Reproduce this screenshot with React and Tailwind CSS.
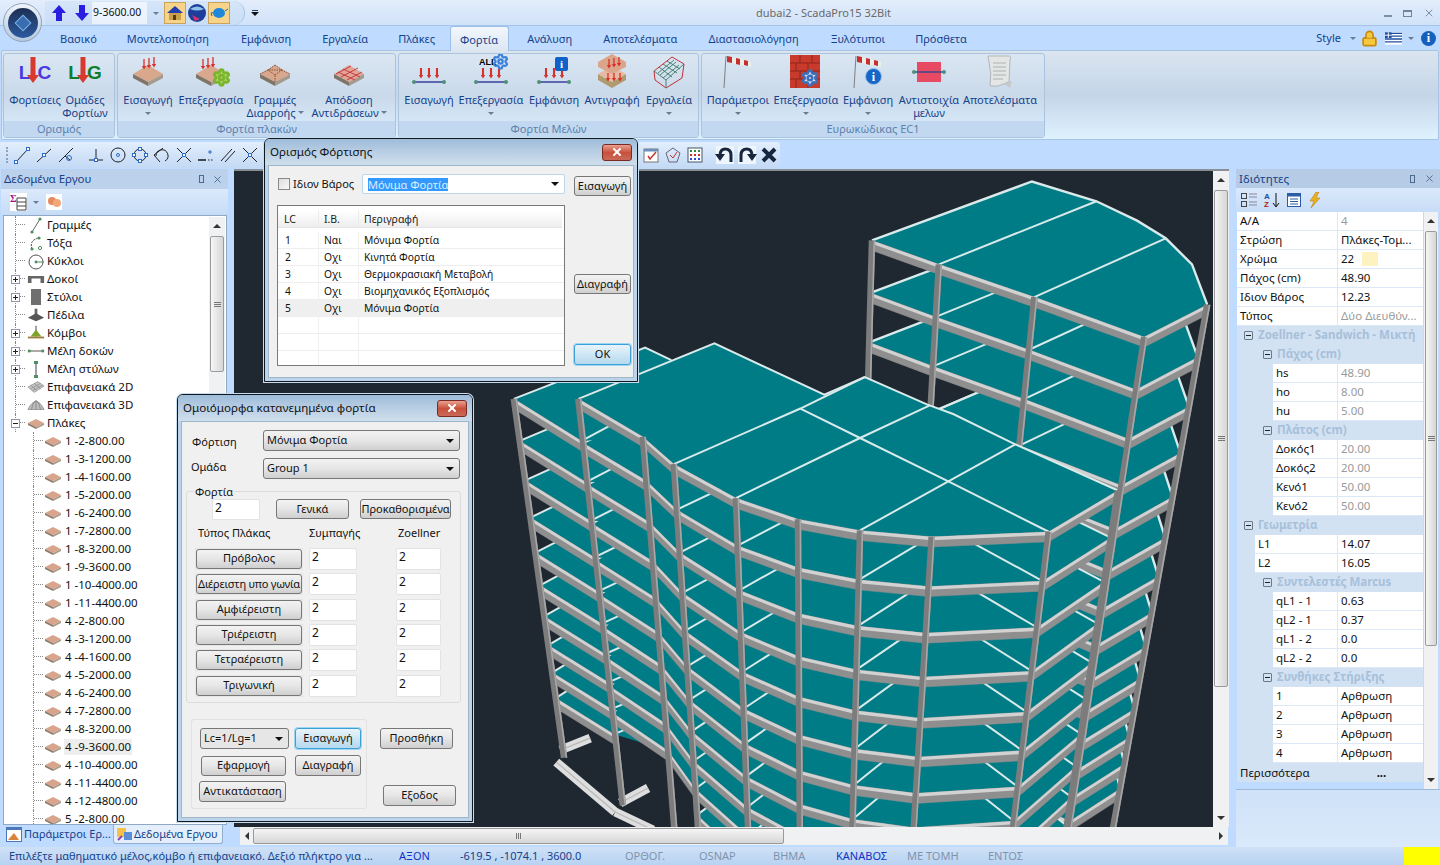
import React from "react";
import { Settings, Lock, X } from "lucide-react";

const X0 = (z) => 480 + 0.4783 * z;
const Y0 = (z) => 170 + 0.4211 * z;
const lvl = (p, k, base) => {
  const dy = p[2] ?? (base ?? 100 + (p[1] - 542) * 0.055);
  const g = (1 - Math.pow(0.94, k)) / 0.06;
  return [p[0] + ((690 - p[0]) / (5566 - p[1])) * dy * g, p[1] + dy * g];
};
const pts = (arr, k, base) => arr.map((p) => { const q = lvl(p, k, base); return `${X0(q[0]).toFixed(1)},${Y0(q[1]).toFixed(1)}`; }).join(" ");

const TEAL = "#007c86";
const band = (p, q, h0, h1) => [[p[0], p[1] + h0], [q[0], q[1] + h0], [q[0], q[1] + h1], [p[0], p[1] + h1]].map((c) => `${X0(c[0]).toFixed(1)},${Y0(c[1]).toFixed(1)}`).join(" ");
const Beam = ({ arr, k, base, h = 24 }) => (
  <g>
    {arr.slice(1).map((b, i) => {
      const p = lvl(arr[i], k, base), q = lvl(b, k, base);
      return (
        <g key={i}>
          <polygon points={band(p, q, 0, h)} fill="#8f8f8f" stroke="#8f8f8f" strokeWidth="0.5" />
          <polygon points={band(p, q, 0, 8)} fill="#d2d2d2" />
        </g>
      );
    })}
  </g>
);
const Col = ({ p, from = 0, to, base }) => {
  const a = lvl(p, from, base), b = lvl(p, to, base);
  return (
    <g>
      <line x1={X0(a[0])} y1={Y0(a[1])} x2={X0(b[0])} y2={Y0(b[1])} stroke="#7c7c7c" strokeWidth={6.5} />
      <line x1={X0(a[0]) + 2.4} y1={Y0(a[1])} x2={X0(b[0]) + 2.4} y2={Y0(b[1])} stroke="#a8a8a8" strokeWidth={1.6} />
    </g>
  );
};
const Lines = ({ list, k, base }) => list.map((l, i) => <polyline key={i} points={pts(l, k, base)} fill="none" stroke="#d8eaea" strokeWidth={2} />);

const FOUND = [[556,762,615,812],[560,750,590,738],[620,803,648,788],[615,812,653,830]];

function Building() {
  const TB = 125;
  const T = [[820,165],[1155,25],[1290,72],[1375,118],[1435,160],[1490,222],[1522,318],[1390,395],[1160,300],[960,222]];
  const TLow = [[960,222],[1290,72],[1375,118],[1435,160],[1490,222],[1522,318],[1390,395],[1160,300]];
  const Tfront = [[820,165],[960,222],[1160,300],[1390,395],[1522,318]];
  const Tfront2 = [[960,222],[1160,300],[1390,395],[1522,318]];
  const Tcurve = [[820,165],[1155,25],[1290,72],[1375,118],[1435,160],[1490,222],[1522,318]];
  const Tcurve2 = [[960,222],[1290,72],[1375,118],[1435,160],[1490,222],[1522,318]];
  const Tl = [[[960,222],[1290,72]],[[1160,300],[1435,160]]];
  const B = [205,542,105];
  const W = [[70,542],[345,420],[400,450],[205,540],[340,632],[212,642,98]];
  const Wb = [[70,542],[212,642,98]];
  const Wl = [[[70,542],[345,420],[400,450]],[[212,642,98],[330,570]]];
  const L = [B,[490,410],[720,532],[805,490],[935,555],[990,578],[1120,650],[1335,760],[1190,858],[945,870],[795,855],[665,828],[535,778],[405,697],[340,632]];
  const L2 = [[405,697],[670,565],[805,490],[935,555],[990,578],[1120,650],[1335,760],[1190,858],[945,870],[795,855],[665,828],[535,778]];
  const Lf = [B,[340,632],[405,697],[535,778],[665,828],[795,855],[945,870],[1190,858],[1335,760]];
  const Lback = [B,[490,410],[720,532],[805,490],[935,555],[990,578],[1120,650],[1335,760]];
  const Ll = [[[405,697],[670,565],[805,490]],[[535,778],[795,635],[940,558]],[[795,855],[980,738],[1120,650]],[[1190,858],[980,738],[795,635],[670,565]]];
  const levels = [13,12,11,10,9,8,7,6,5,4,3,2,1,0];
  return (
    <svg viewBox="234 170 979 657" className="block w-full h-full">
      {levels.map((k) => {
        const low = k >= 3;
        return (
          <g key={k}>
            <polygon points={pts(low ? TLow : T, k, TB)} fill={TEAL} />
            <polyline points={pts(low ? Tcurve2 : Tcurve, k, TB)} fill="none" stroke="#d8eaea" strokeWidth={2.4} />
            <Lines list={Tl} k={k} base={TB} />
            <Beam arr={low ? Tfront2 : Tfront} k={k} base={TB} />
          </g>
        );
      })}
      {[[820,165],[960,222],[1160,300]].map((p, i) => <Col key={i} p={p} to={3} base={TB} />)}
      {FOUND.map((a, i) => (
        <g key={i}>
          <line x1={a[0]} y1={a[1]} x2={a[2]} y2={a[3]} stroke="#dedede" strokeWidth={9} />
          <line x1={a[0]} y1={a[1]} x2={a[2]} y2={a[3]} stroke="#b8b8b8" strokeWidth={1.2} />
        </g>
      ))}
      {levels.map((k) => {
        const deep = k >= 10;
        return (
          <g key={k}>
            {!deep && <polygon points={pts(W, k)} fill={TEAL} />}
            {!deep && <Lines list={Wl} k={k} />}
            {!deep && <Beam arr={Wb} k={k} />}
            <polygon points={pts(deep ? L2 : L, k)} fill={TEAL} />
            <polyline points={pts(deep ? Lback.slice(3) : Lback, k)} fill="none" stroke="#d8eaea" strokeWidth={2} />
            <Lines list={Ll} k={k} />
            <Beam arr={deep ? Lf.slice(2) : Lf} k={k} />
          </g>
        );
      })}
      <Col p={[70,542]} to={11.6} />
      <Col p={B} to={13} />
      {Lf.slice(1).map((p, i) => <Col key={i} p={p} to={16} />)}
      <Col p={[1390,395]} to={16} base={TB} />
      <Col p={[1522,318]} to={16} base={TB} />
    </svg>
  );
}

/* ---------- ribbon icons ---------- */
const RA = ({ x, y, h = 9, s = 1 }) => (
  <g stroke="#d8312a" fill="#d8312a" strokeWidth={1.3 * s}>
    <line x1={x} y1={y} x2={x} y2={y + h} />
    <polygon points={`${x - 2.2},${y + h - 2} ${x + 2.2},${y + h - 2} ${x},${y + h + 1.5}`} stroke="none" />
  </g>
);
const Slab = ({ children, top = "#d9a78c" }) => (
  <svg width="36" height="34" viewBox="0 0 36 34">
    <polygon points="3,19 18,10 33,19 18,27" fill={top} />
    <polygon points="3,19 18,27 18,31 3,23" fill="#7e7468" />
    <polygon points="33,19 18,27 18,31 33,23" fill="#a49a8e" />
    {children}
  </svg>
);
const LoadBeam = ({ children }) => (
  <svg width="36" height="34" viewBox="0 0 36 34">
    <line x1="3" y1="27" x2="33" y2="27" stroke="#37409c" strokeWidth="1.6" />
    <circle cx="3" cy="27" r="2" fill="#4f8f78" /><circle cx="33" cy="27" r="2" fill="#4f8f78" />
    <RA x={10} y={13} h={9} s={1.6} /><RA x={18} y={13} h={9} s={1.6} /><RA x={26} y={13} h={9} s={1.6} />
    {children}
  </svg>
);
const Sock = ({ children }) => (
  <svg width="36" height="36" viewBox="0 0 36 36">
    <line x1="6" y1="2" x2="4" y2="34" stroke="#666" strokeWidth="0.8" />
    <polygon points="7,2 31,8 31,13 7,8" fill="#e8efe8" />
    <polygon points="7,2 12,3 12,9 7,8" fill="#c92f2f" /><polygon points="16,4 20,5 20,11 16,10" fill="#c92f2f" /><polygon points="24,6 28,7 28,12 24,11" fill="#c92f2f" />
    {children}
  </svg>
);
const LG = ({ a, b, c }) => (
  <div className="relative h-[34px] w-[40px] flex items-center justify-center">
    <span className={`flex gap-[7px] text-[19px] font-bold leading-none ${c} font-['Liberation_Sans',sans-serif]`}><span>{a}</span><span>{b}</span></span>
    <svg className="absolute left-[12px] top-[2px]" width="12" height="28" viewBox="0 0 12 28">
      <rect x="3.5" y="0" width="5" height="19" fill="#d8392f" /><polygon points="0,18 12,18 6,26" fill="#d8392f" />
    </svg>
  </div>
);
const IC = {
  lc: <LG a="L" b="C" c="text-[#4a39e0]" />,
  lg: <LG a="L" b="G" c="text-[#0d7d2c]" />,
  s1: <Slab><RA x={14} y={4} /><RA x={19} y={3} /><RA x={24} y={2} /></Slab>,
  s2: (
    <div className="relative">
      <Slab><RA x={10} y={4} /><RA x={15} y={3} /><RA x={20} y={2} /></Slab>
      <Settings size={19} strokeWidth={3.4} className="absolute left-[19px] top-[13px] text-[#7ab52e] fill-[#b0d060]" />
    </div>
  ),
  s3: <Slab><g stroke="#6d3f2b" strokeWidth="0.8" strokeDasharray="1.5 1" fill="none"><path d="M3 19 L11 15 L25 15 L33 19 M11 15 L18 10 M25 15 L18 10 M18 27 L18 20 L11 15 M18 20 L25 15" /></g></Slab>,
  s4: <Slab top="#e0a595"><g stroke="#c4303a" strokeWidth="0.9" fill="none"><path d="M7 17 L24 25 M12 14 L29 22 M10 22 L27 13 M16 25 L31 17 M5 19 L20 11" /></g></Slab>,
  m1: <LoadBeam />,
  m2: (
    <div className="relative">
      <LoadBeam><text x="6" y="10" fontSize="9" fontWeight="700" fontFamily="Liberation Sans">ALL</text></LoadBeam>
      <Settings size={17} strokeWidth={3.2} className="absolute left-[19px] top-[-2px] text-[#3b82d8]" />
    </div>
  ),
  m3: (
    <LoadBeam>
      <rect x="19" y="2" width="13" height="14" rx="2" fill="#0f63c8" />
      <text x="25.5" y="13" fontSize="11" fontWeight="700" fill="#fff" textAnchor="middle" fontFamily="Liberation Serif">i</text>
    </LoadBeam>
  ),
  m4: (
    <svg width="32" height="36" viewBox="0 0 32 36">
      <polygon points="2,20 16,28 30,20 30,26 16,34 2,26" fill="#b09a6f" />
      <polygon points="2,20 16,12 30,20 16,28" fill="#e7b9a0" />
      <polygon points="2,8 16,0 30,8 30,13 16,20 2,13" fill="#dba58c" />
      <RA x={13} y={5} h={8} /><RA x={18} y={4} h={8} /><RA x={23} y={3} h={8} />
      <RA x={12} y={19} h={7} /><RA x={18} y={19} h={7} /><RA x={24} y={19} h={7} />
    </svg>
  ),
  m5: (
    <svg width="34" height="36" viewBox="0 0 34 36" fill="none">
      <path d="M2 17 L20 3 L32 10 L30 24 L14 34 L3 26 Z" stroke="#c4303a" strokeWidth="1" />
      <path d="M2 17 L14 26 L32 10 M14 26 L14 34 M7 13 L20 23 M11 10 L25 19 M15 7 L28 15 M8 21 L24 8 M11 24 L27 11 M6 19 L22 6" stroke="#3a7a66" strokeWidth="0.9" />
    </svg>
  ),
  e1: <Sock />,
  e2: (
    <div className="relative">
      <svg width="32" height="34" viewBox="0 0 32 34">
        <rect width="30" height="33" y="0" fill="#c83a2c" />
        <path d="M0 8 H30 M0 16 H30 M0 24 H30 M10 0 V8 M22 0 V8 M6 8 V16 M18 8 V16 M10 16 V24 M22 16 V24 M6 24 V33 M18 24 V33" stroke="#8f241a" strokeWidth="1" />
      </svg>
      <Settings size={18} strokeWidth={3.4} className="absolute left-[11px] top-[14px] text-[#3d6fb8] fill-[#cfe0f5]" />
    </div>
  ),
  e3: (
    <div className="relative">
      <Sock />
      <div className="absolute left-[15px] top-[14px] w-[17px] h-[17px] rounded-full bg-[#1666c8] border border-[#9fc4ea] flex items-center justify-center text-white text-[12px] font-bold leading-none font-['Liberation_Serif',serif]">i</div>
    </div>
  ),
  e4: (
    <svg width="34" height="30" viewBox="0 0 34 30">
      <rect x="5" y="5" width="24" height="20" fill="#e84a63" />
      <line x1="1" y1="15" x2="33" y2="15" stroke="#3b4a8e" strokeWidth="1.5" />
      <circle cx="2" cy="15" r="2" fill="#4f8f78" /><circle cx="32" cy="15" r="2" fill="#4f8f78" />
    </svg>
  ),
  e5: (
    <svg width="32" height="36" viewBox="0 0 32 36">
      <path d="M4 2 H24 Q28 2 26 6 L25 28 L14 32 L6 32 Q8 20 5 8 Z" fill="#e4e6e6" stroke="#a6aaa8" strokeWidth="0.8" />
      <path d="M9 9 H22 M9 13 H22 M9 17 H22 M9 21 H22 M9 25 H19" stroke="#a0a4a4" strokeWidth="0.8" />
      <path d="M20 30 L28 27 L26 34 Z" fill="#c6cac8" />
    </svg>
  ),
};

const Caret = () => <span className="block w-0 h-0 border-x-[3px] border-x-transparent border-t-[3px] border-t-[#6a7c94]" />;

const RItem = ({ w, icon, l1, l2, caret, inlineCaret }) => (
  <div className="flex flex-col items-center" style={{ width: w }}>
    <div className="h-[36px] flex items-center justify-center">{icon}</div>
    <div className="mt-[3px] text-[11px] leading-[13px] text-[#15428b] whitespace-nowrap text-center">{l1}</div>
    {l2 && (
      <div className="text-[11px] leading-[13px] text-[#15428b] whitespace-nowrap flex items-center gap-[2px]">
        {l2}{inlineCaret && <Caret />}
      </div>
    )}
    {caret && <div className="mt-[6px]"><Caret /></div>}
  </div>
);

const RGroup = ({ w, pl, title, children }) => (
  <div className="h-[85px] flex flex-col rounded-[3px] border border-[#aac3df] overflow-hidden bg-gradient-to-b from-[#dbe6f2] via-[#c9d9ea] to-[#dceefd] shrink-0" style={{ width: w }}>
    <div className="h-[68px] flex" style={{ paddingLeft: pl }}>{children}</div>
    <div className="flex-1 bg-[#c2d8f0] text-center text-[11px] leading-[16px] text-[#5b82ad]">{title}</div>
  </div>
);

/* ---------- toolbar icons ---------- */
const TI = ({ children, w = 22 }) => (
  <svg width={w} height="20" viewBox="0 0 20 20" fill="none" stroke="#222" strokeWidth="1" className="shrink-0">{children}</svg>
);
const Dot = ({ x, y }) => <rect x={x - 1.5} y={y - 1.5} width="3" height="3" fill="#fff" stroke="#2a6cc8" strokeWidth="1" />;
const TOOLS1 = [
  <TI><path d="M4 17 L16 4" /><Dot x={4} y={17} /><Dot x={16} y={4} /></TI>,
  <TI><path d="M3 17 L17 4" /><Dot x={10} y={10} /></TI>,
  <TI><path d="M3 17 L17 3 M9 11 L14 15" /><circle cx="13" cy="13" r="2.5" stroke="#2a6cc8" /></TI>,
];
const TOOLS2 = [
  <TI><path d="M3 15 H17 M10 4 V15" /><Dot x={10} y={15} /></TI>,
  <TI><circle cx="10" cy="10" r="7" /><circle cx="10" cy="10" r="1.5" stroke="#2a6cc8" /></TI>,
  <TI><circle cx="10" cy="10" r="6" /><Dot x={10} y={4} /><Dot x={10} y={16} /><Dot x={4} y={10} /><Dot x={16} y={10} /></TI>,
  <TI><path d="M4 11 A6 6 0 1 1 13 16" /><path d="M2 10 L11 3 M2 10 L8 17" /></TI>,
  <TI><path d="M3 3 L17 17 M17 3 L3 17" /><Dot x={10} y={10} /></TI>,
  <TI><path d="M2 15 H10" strokeWidth="1.6" /><path d="M12 15 H18" strokeDasharray="1.5 1.5" /><path d="M14 5 V9 M12 7 H16" stroke="#2a6cc8" /></TI>,
  <TI><path d="M3 16 L14 4 M7 17 L17 6" /></TI>,
  <TI><path d="M3 3 L8 8 M12 12 L17 17 M17 3 L12 8 M8 12 L3 17" /><Dot x={10} y={10} /></TI>,
];
const TOOLS3 = [
  <TI><rect x="3" y="4" width="14" height="13" fill="#fff" stroke="#777" /><rect x="3" y="4" width="14" height="2.5" fill="#6d8fc0" stroke="none" /><path d="M7 11 L9 14 L15 7" stroke="#c8312b" strokeWidth="1.4" /></TI>,
  <TI><polygon points="10,3 17,8 14,17 6,17 3,8" stroke="#667" /><path d="M7 10 L10 13 L14 7" stroke="#c8312b" /></TI>,
  <TI><rect x="3" y="3" width="14" height="14" fill="#fff" stroke="#456" /><path d="M5 6 H7 M9 6 H11 M13 6 H15" stroke="#2a8a3a" strokeWidth="2" /><path d="M5 10 H7 M9 10 H11 M13 10 H15" stroke="#c8312b" strokeWidth="2" /><path d="M5 14 H7 M9 14 H11 M13 14 H15" stroke="#2a4ac8" strokeWidth="2" /></TI>,
];
const TOOLS4 = [
  <TI><rect x="1" y="1" width="18" height="18" fill="#eef5fd" stroke="none" /><path d="M16 17 V10 Q16 4 10 4 Q6 4 5 9" stroke="#16263c" strokeWidth="3" /><polygon points="0,9 10,9 5,16" fill="#16263c" stroke="none" /></TI>,
  <TI><rect x="1" y="1" width="18" height="18" fill="#eef5fd" stroke="none" /><path d="M4 17 V10 Q4 4 10 4 Q14 4 15 9" stroke="#16263c" strokeWidth="3" /><polygon points="20,9 10,9 15,16" fill="#16263c" stroke="none" /></TI>,
  <TI><path d="M4 4 L16 16 M16 4 L4 16" stroke="#16263c" strokeWidth="4" /></TI>,
];

/* ---------- scrollbars ---------- */
const Arrow = ({ d }) => {
  const m = {
    u: "border-x-[4px] border-x-transparent border-b-[4px] border-b-[#333]",
    d: "border-x-[4px] border-x-transparent border-t-[4px] border-t-[#333]",
    l: "border-y-[4px] border-y-transparent border-r-[4px] border-r-[#333]",
    r: "border-y-[4px] border-y-transparent border-l-[4px] border-l-[#333]",
  };
  return <span className={`block w-0 h-0 ${m[d]}`} />;
};
const VScroll = ({ top, thumb, w = 16 }) => (
  <div className="flex flex-col h-full bg-[#eff1f3] shrink-0 items-center" style={{ width: w }}>
    <div className="h-[18px] flex items-center justify-center shrink-0"><Arrow d="u" /></div>
    <div className="flex-1 w-full px-[1px]">
      <div className="w-full rounded-[2px] border border-[#9a9a9a] bg-gradient-to-r from-[#f6f6f6] to-[#d6d6d6] flex flex-col items-center justify-center gap-[1px]" style={{ marginTop: top, height: thumb }}>
        <span className="block w-[7px] h-[1px] bg-[#777]" /><span className="block w-[7px] h-[1px] bg-[#777]" /><span className="block w-[7px] h-[1px] bg-[#777]" />
      </div>
    </div>
    <div className="h-[18px] flex items-center justify-center shrink-0"><Arrow d="d" /></div>
  </div>
);

/* ---------- tree ---------- */
const Tan = () => (
  <svg width="18" height="12" viewBox="0 0 18 12"><polygon points="1,6 9,2 17,6 9,10" fill="#d8a58c" /><polygon points="1,6 9,10 9,12 1,8" fill="#8e7a6a" /><polygon points="17,6 9,10 9,12 17,8" fill="#aa9a8a" /></svg>
);
const TS = ({ children }) => <svg width="20" height="17" viewBox="0 0 20 17" fill="none">{children}</svg>;
const TREE_TOP = [
  ["Γραμμές", 0, <TS><path d="M6 15 L14 2" stroke="#666" /><circle cx="6" cy="15" r="1.6" fill="#4f9060" /><circle cx="14" cy="2" r="1.6" fill="#4f9060" /></TS>],
  ["Τόξα", 0, <TS><path d="M6 14 Q3 5 13 3" stroke="#444" strokeDasharray="2 1" /><circle cx="6" cy="14" r="1.6" fill="#4f9060" /><circle cx="13" cy="3" r="1.6" fill="#4f9060" /><circle cx="14" cy="13" r="1.6" stroke="#4f9060" /></TS>],
  ["Κύκλοι", 0, <TS><circle cx="10" cy="9" r="7" stroke="#555" /><path d="M10 9 H18" stroke="#4f9060" /><circle cx="10" cy="9" r="1.4" fill="#4f9060" /></TS>],
  ["Δοκοί", 1, <svg width="18" height="11" viewBox="0 0 20 12"><path d="M1 10 V2 H19 V10 H15 V5 H5 V10 Z" fill="#666" /></svg>],
  ["Στύλοι", 1, <svg width="12" height="16" viewBox="0 0 12 16"><rect x="1" y="0" width="10" height="16" fill="#6f6f6f" /></svg>],
  ["Πέδιλα", 0, <svg width="18" height="14" viewBox="0 0 20 14"><rect x="8.5" y="0" width="3" height="7" fill="#666" /><polygon points="1,10 10,5 19,10 10,14" fill="#555" /></svg>],
  ["Κόμβοι", 1, <svg width="18" height="16" viewBox="0 0 20 16"><line x1="10" y1="0" x2="10" y2="12" stroke="#333" /><polygon points="4,12 10,4 16,12" fill="#7da32c" /><rect x="1" y="12" width="18" height="2" fill="#a07a3c" /></svg>],
  ["Μέλη δοκών", 1, <svg width="18" height="8" viewBox="0 0 20 8"><line x1="1" y1="4" x2="19" y2="4" stroke="#444" /><rect x="1" y="2.5" width="3" height="3" fill="#4f9060" /><rect x="16" y="2.5" width="3" height="3" fill="#4f9060" /></svg>],
  ["Μέλη στύλων", 1, <svg width="10" height="17" viewBox="0 0 10 17"><line x1="5" y1="1" x2="5" y2="16" stroke="#444" /><rect x="3" y="0" width="4" height="3" fill="#4f9060" /><rect x="3" y="14" width="4" height="3" fill="#4f9060" /></svg>],
  ["Επιφανειακά 2D", 0, <svg width="18" height="14" viewBox="0 0 20 14" fill="none"><polygon points="1,7 12,1 19,6 8,13" fill="#c6c6c6" stroke="#777" strokeWidth=".6" /><path d="M4 5 L11 11 M8 3 L15 9 M4 9 L15 3 M6 11 L17 5" stroke="#777" strokeWidth=".6" /></svg>],
  ["Επιφανειακά 3D", 0, <svg width="18" height="14" viewBox="0 0 20 14" fill="none"><path d="M1 12 Q10 -6 19 12 Z" fill="#bdbdbd" stroke="#666" strokeWidth=".6" /><path d="M5 12 Q7 3 10 2 M10 12 V2 M15 12 Q13 3 10 2" stroke="#666" strokeWidth=".6" /></svg>],
  ["Πλάκες", 2, <Tan />],
];
const LEAVES = ["1 -2-800.00","1 -3-1200.00","1 -4-1600.00","1 -5-2000.00","1 -6-2400.00","1 -7-2800.00","1 -8-3200.00","1 -9-3600.00","1 -10-4000.00","1 -11-4400.00","4 -2-800.00","4 -3-1200.00","4 -4-1600.00","4 -5-2000.00","4 -6-2400.00","4 -7-2800.00","4 -8-3200.00","4 -9-3600.00","4 -10-4000.00","4 -11-4400.00","4 -12-4800.00","5 -2-800.00"];

const Box = ({ plus }) => (
  <span className="absolute left-[7px] top-[5px] w-[9px] h-[9px] border border-[#8a99b0] bg-white flex items-center justify-center">
    <span className="absolute w-[5px] h-[1px] bg-[#222]" />
    {plus && <span className="absolute w-[1px] h-[5px] bg-[#222]" />}
  </span>
);

function Tree() {
  return (
    <div className="flex-1 min-w-0 overflow-hidden">
      {TREE_TOP.map(([t, b, ic]) => (
        <div key={t} className="h-[18px] flex items-center relative">
          <div className="w-[11px] shrink-0" />
          <div className="w-[10px] h-full shrink-0 border-l border-dotted border-[#888]">
            <div className="h-[9px] border-b border-dotted border-[#888]" />
          </div>
          {b === 1 && <Box plus />}
          {b === 2 && <Box />}
          <div className="w-[22px] flex justify-center shrink-0">{ic}</div>
          <span className="text-[11.5px] text-[#111] whitespace-nowrap">{t}</span>
        </div>
      ))}
      {LEAVES.map((t) => (
        <div key={t} className="h-[18px] flex items-center">
          <div className="w-[29px] shrink-0" />
          <div className="w-[10px] h-full shrink-0 border-l border-dotted border-[#888]">
            <div className="h-[9px] border-b border-dotted border-[#888]" />
          </div>
          <div className="w-[20px] flex justify-center shrink-0"><Tan /></div>
          <span className={`text-[11.5px] leading-[16px] px-[1px] ml-[1px] text-[#111] whitespace-nowrap ${t === "4 -9-3600.00" ? "bg-[#eeeeee]" : ""}`}>{t}</span>
        </div>
      ))}
    </div>
  );
}

/* ---------- property grid ---------- */
const PROPS = [
  ["p",0,"Α/Α","4",1],["p",0,"Στρώση","Πλάκες-Τομ...",0],["c",0,"Χρώμα","22",0],["p",0,"Πάχος (cm)","48.90",0],["p",0,"Ιδιον Βάρος","12.23",0],["p",0,"Τύπος","Δύο Διευθύν...",1],
  ["s",0,"Zoellner - Sandwich - Μικτή"],["s",1,"Πάχος (cm)"],["p",2,"hs","48.90",1],["p",2,"ho","8.00",1],["p",2,"hu","5.00",1],
  ["s",1,"Πλάτος (cm)"],["p",2,"Δοκός1","20.00",1],["p",2,"Δοκός2","20.00",1],["p",2,"Κενό1","50.00",1],["p",2,"Κενό2","50.00",1],
  ["s",0,"Γεωμετρία"],["p",1,"L1","14.07",0],["p",1,"L2","16.05",0],
  ["s",1,"Συντελεστές Marcus"],["p",2,"qL1 - 1","0.63",0],["p",2,"qL2 - 1","0.37",0],["p",2,"qL1 - 2","0.0",0],["p",2,"qL2 - 2","0.0",0],
  ["s",1,"Συνθήκες Στήριξης"],["p",2,"1","Αρθρωση",0],["p",2,"2","Αρθρωση",0],["p",2,"3","Αρθρωση",0],["p",2,"4","Αρθρωση",0],
];

const Collapse = () => (
  <span className="w-[9px] h-[9px] border border-[#6b7a8a] rounded-[1px] flex items-center justify-center shrink-0"><span className="w-[5px] h-[1px] bg-[#222]" /></span>
);

function PropRow({ r }) {
  const [type, ind, name, val, gray] = r;
  if (type === "s") {
    return (
      <div className="h-[19px] flex items-center bg-[#d3e2f2] border-b border-[#d3e2f2]" style={{ paddingLeft: ind === 0 ? 7 : 26 }}>
        <Collapse />
        <span className="ml-[5px] text-[11.5px] font-bold text-[#a7c0da] whitespace-nowrap">{name}</span>
      </div>
    );
  }
  const ml = [0, 18, 36][ind];
  return (
    <div className="h-[19px] flex bg-[#d3e2f2]">
      <div style={{ width: ml }} className="shrink-0" />
      <div className="flex-1 flex bg-white border-b border-[#dce8f5] min-w-0">
        <div className="flex-1 min-w-0 border-r border-[#dce8f5] pl-[3px] text-[11.5px] leading-[18px] text-[#111] whitespace-nowrap">{name}</div>
        <div className={`w-[85px] shrink-0 pl-[3px] text-[11.5px] leading-[18px] whitespace-nowrap flex ${gray ? "text-[#9a9a9a]" : "text-[#111]"}`}>
          {val}{type === "c" && <span className="ml-[8px] mt-[2px] w-[16px] h-[14px] bg-[#fdf3c0]" />}
        </div>
      </div>
    </div>
  );
}

/* ---------- dialog controls ---------- */
const Btn = ({ w, h = 21, children, focus, className = "" }) => (
  <div className={`flex items-center justify-center rounded-[3px] border text-[11px] text-[#111] whitespace-nowrap shrink-0 ${focus ? "border-[#3c9fd8] bg-gradient-to-b from-[#e8f4fb] to-[#b5d9ee] shadow-[0_0_0_1px_#9fd6f2]" : "border-[#777] bg-gradient-to-b from-[#f3f3f3] via-[#e6e6e6] to-[#cfcfcf]"} ${className}`} style={{ width: w, height: h }}>{children}</div>
);
const Tri = () => <span className="block w-0 h-0 border-x-[4px] border-x-transparent border-t-[4px] border-t-[#111]" />;
const Combo = ({ w, children, h = 21, className = "" }) => (
  <div className={`flex items-center justify-between rounded-[3px] border border-[#777] bg-gradient-to-b from-[#f3f3f3] via-[#e6e6e6] to-[#d0d0d0] pl-[3px] pr-[5px] text-[11px] text-[#111] shrink-0 ${className}`} style={{ width: w, height: h }}>
    <span>{children}</span><Tri />
  </div>
);
const Inp = ({ w = 48, h = 22, v = "2", className = "" }) => (
  <div className={`bg-white border border-[#e3e3e3] rounded-[2px] pl-[2px] text-[12px] leading-[16px] text-[#111] shrink-0 ${className}`} style={{ width: w, height: h }}>{v}</div>
);

const Dialog = ({ title, left, top, w, h, children }) => (
  <div className="absolute rounded-t-[6px] border border-[#101820] bg-[#bcd4ea] shadow-[0_0_0_1px_#c8dcee] flex flex-col" style={{ left, top, width: w, height: h }}>
    <div className="h-[26px] flex items-center justify-between pl-[5px] pr-[5px] rounded-t-[5px] bg-gradient-to-b from-[#9dbbd8] via-[#b9cfe4] to-[#cfdeec] shrink-0">
      <span className="text-[11.6px] text-[#111] whitespace-nowrap">{title}</span>
      <div className="w-[30px] h-[17px] rounded-[3px] border border-[#7a2a20] bg-gradient-to-b from-[#e8a090] via-[#c8503c] to-[#c86a58] flex items-center justify-center">
        <X size={12} strokeWidth={4} className="text-white" />
      </div>
    </div>
    <div className="flex-1 mx-[3px] mb-[3px] bg-[#f0f0f0] min-h-0 border border-[#9fb5c8]">{children}</div>
  </div>
);

const LOADS = [["1","Ναι","Μόνιμα Φορτία"],["2","Οχι","Κινητά Φορτία"],["3","Οχι","Θερμοκρασιακή Μεταβολή"],["4","Οχι","Βιομηχανικός Εξοπλισμός"],["5","Οχι","Μόνιμα Φορτία"],["","",""],["","",""],["","",""]];

function LoadDialog() {
  return (
    <Dialog title="Ορισμός Φόρτισης" left={264} top={138} w={374} h={244}>
      <div className="flex h-full pl-[8px] pt-[6px]">
        <div className="w-[288px] shrink-0">
          <div className="h-[24px] flex items-center">
            <span className="w-[12px] h-[12px] shrink-0 border border-[#8a8a8a] bg-gradient-to-br from-[#dcdcdc] to-[#fafafa] ml-[1px]" />
            <span className="ml-[3px] w-[69px] shrink-0 text-[11px] text-[#111] whitespace-nowrap">Ιδιον Βάρος</span>
            <div className="w-[203px] shrink-0 h-[20px] bg-white border border-[#bcd6ea] flex items-center justify-between pl-[5px] pr-[5px] rounded-[2px]">
              <span className="text-[11px] leading-[13px] bg-[#3399ff] text-[#dbeeff] whitespace-nowrap">Μόνιμα Φορτία</span><Tri />
            </div>
          </div>
          <div className="mt-[9px] h-[161px] border border-[#7a7a7a] bg-white overflow-hidden">
            <div className="mt-[4px] h-[18px] flex text-[10.5px] leading-[18px] text-[#222] bg-gradient-to-b from-[#ffffff] to-[#eeeeee] border-b border-[#e4e4e4] mr-[2px]">
              <div className="w-[41px] pl-[6px] border-r border-[#ececec]">LC</div>
              <div className="w-[40px] pl-[5px] border-r border-[#ececec]">Ι.Β.</div>
              <div className="flex-1 pl-[5px]">Περιγραφή</div>
            </div>
            <div className="mt-[4px]">
              {LOADS.map((r, i) => (
                <div key={i} className={`h-[17px] flex text-[10.3px] leading-[16px] text-[#111] border-b border-[#eeeeee] ${i === 4 ? "bg-[#efefef]" : ""}`}>
                  <div className="w-[41px] pl-[7px] border-r border-[#f0f0f0]">{r[0]}</div>
                  <div className="w-[40px] pl-[5px] border-r border-[#f0f0f0]">{r[1]}</div>
                  <div className="flex-1 pl-[5px] whitespace-nowrap">{r[2]}</div>
                </div>
              ))}
            </div>
          </div>
        </div>
        <div className="ml-[9px] flex flex-col">
          <Btn w={57} h={20} className="mt-[4px]">Εισαγωγή</Btn>
          <Btn w={57} h={20} className="mt-[78px]">Διαγραφή</Btn>
          <Btn w={57} h={21} focus className="mt-[50px]">OK</Btn>
        </div>
      </div>
    </Dialog>
  );
}

const TYPES = [["Πρόβολος",25],["Διέρειστη υπο γωνία",26],["Αμφιέρειστη",25],["Τριέρειστη",25],["Τετραέρειστη",25],["Τριγωνική",27]];

function UniformDialog() {
  return (
    <Dialog title="Ομοιόμορφα κατανεμημένα φορτία" left={177} top={394} w={296} h={428}>
      <div className="pl-[8px] pt-[8px] text-[#111]">
        <div className="flex items-center h-[21px]">
          <span className="w-[73px] pl-[2px] text-[11px] mt-[3px]">Φόρτιση</span>
          <Combo w={197}>Μόνιμα Φορτία</Combo>
        </div>
        <div className="flex items-center h-[21px] mt-[7px]">
          <span className="w-[73px] text-[11px] pl-[1px] -mt-[2px]">Ομάδα</span>
          <Combo w={197}>Group 1</Combo>
        </div>
        <div className="relative mt-[12px] w-[275px] h-[212px] border border-[#dcdcdc] rounded-[3px] ml-[-4px]">
          <span className="absolute left-[7px] -top-[7px] bg-[#f0f0f0] px-[1px] text-[11px] leading-[13px]">Φορτία</span>
          <div className="flex items-start pt-[7px] pl-[25px]">
            <Inp w={48} h={21} />
            <Btn w={73} h={20} className="ml-[16px]">Γενικά</Btn>
            <Btn w={91} h={20} className="ml-[11px]">Προκαθορισμένα</Btn>
          </div>
          <div className="flex text-[11px] h-[20px] items-center mt-[3px]">
            <span className="w-[122px] pl-[11px]">Τύπος Πλάκας</span>
            <span className="w-[89px]">Συμπαγής</span>
            <span>Zoellner</span>
          </div>
          <div className="mt-[3px] pl-[8px]">
            {TYPES.map(([t, h]) => (
              <div key={t} className="flex items-center" style={{ height: h }}>
                <div className="p-[1px] bg-[#e6e6e6]"><Btn w={106} h={20} className={t.length > 14 ? "tracking-[-0.2px]" : ""}>{t}</Btn></div>
                <Inp className="ml-[6px]" />
                <Inp className="ml-[39px]" w={45} />
              </div>
            ))}
          </div>
        </div>
        <div className="flex mt-[16px]">
          <div className="w-[176px] h-[90px] ml-[1px] border border-[#e2e2e2] rounded-[3px] px-[8px] pt-[8px] shrink-0">
            <div className="flex items-center gap-[6px]">
              <Combo w={89} className="!bg-none bg-[#e6e6e6]">Lc=1/Lg=1</Combo>
              <Btn w={66} h={21} focus>Εισαγωγή</Btn>
            </div>
            <div className="flex items-center gap-[9px] mt-[6px] ml-[1px]">
              <Btn w={85} h={20}>Εφαρμογή</Btn>
              <Btn w={66} h={21}>Διαγραφή</Btn>
            </div>
            <Btn w={87} h={21} className="mt-[5px] -ml-[1px]">Αντικατάσταση</Btn>
          </div>
          <div className="ml-[13px] flex flex-col">
            <Btn w={73} h={21} className="mt-[9px]">Προσθήκη</Btn>
            <Btn w={73} h={21} className="mt-[36px] ml-[3px]">Εξοδος</Btn>
          </div>
        </div>
      </div>
    </Dialog>
  );
}

const TABS = [["Βασικό",0],["Μοντελοποίηση",0],["Εμφάνιση",2],["Εργαλεία",1],["Πλάκες",0],["Φορτία",-15],["Ανάλυση",-1],["Αποτελέσματα",1],["Διαστασιολόγηση",1],["Ξυλότυποι",2],["Πρόσθετα",0]];

export default function App() {
  return (
    <div className="relative w-[1440px] h-[865px] overflow-hidden bg-[#bfdbff] flex flex-col font-['Noto_Sans',sans-serif]">
      {/* title bar */}
      <div className="h-[26px] shrink-0 flex items-center pt-[1px] bg-gradient-to-b from-[#e3edfb] to-[#d0e2f9] border-b border-[#a5c5ea]">
        <div className="ml-[45px] w-[200px] shrink-0 h-[24px] rounded-r-full bg-gradient-to-b from-[#d6e6fa] to-[#c9ddf6] border-r border-[#a9c2de] flex items-center pl-[6px]">
          <svg width="16" height="18" viewBox="0 0 16 18"><polygon points="8,1 15,9 11,9 11,17 5,17 5,9 1,9" fill="#2a1fe0" /></svg>
          <svg className="ml-[7px]" width="16" height="18" viewBox="0 0 16 18"><polygon points="8,17 15,9 11,9 11,1 5,1 5,9 1,9" fill="#2a1fe0" /></svg>
          <div className="ml-[2px] w-[55px] h-[22px] bg-white/60 flex items-center pl-[1px] text-[10.5px] text-[#111] whitespace-nowrap">9-3600.00</div>
          <div className="w-[17px] flex justify-center"><Caret /></div>
          <div className="w-[22px] h-[22px] bg-[#f8d48a] border border-[#c9a25c] flex items-center justify-center">
            <svg width="18" height="16" viewBox="0 0 18 16"><polygon points="9,1 17,8 1,8" fill="#1f3fb0" /><rect x="3" y="8" width="12" height="7" fill="#c9a04a" /><rect x="7" y="10" width="3" height="5" fill="#5a3a18" /></svg>
          </div>
          <svg width="22" height="22" viewBox="0 0 22 22"><circle cx="11" cy="11" r="9" fill="#1b3f9a" /><path d="M4 7 Q11 2 18 7 Q11 10 4 7" fill="#8fc4e8" /><path d="M6 13 L14 17 L9 19 Z" fill="#d8316a" /></svg>
          <div className="w-[22px] h-[22px] bg-[#f8d48a] border border-[#c9a25c] flex items-center justify-center">
            <svg width="18" height="12" viewBox="0 0 18 12"><ellipse cx="9" cy="6" rx="6" ry="5" fill="#1f88d8" /><path d="M15 4 L18 2 M3 6 Q0 4 2 9" stroke="#1a6ca8" fill="none" /></svg>
          </div>
        </div>
        <div className="ml-[6px] flex flex-col items-center gap-[1px] shrink-0"><span className="w-[6px] h-[1px] bg-[#22405f]" /><Tri /></div>
        <div className="ml-[497px] text-[11px] text-[#6a6a6a] whitespace-nowrap shrink-0">dubai2 - ScadaPro15 32Bit</div>
        <div className="flex-1" />
        <div className="flex items-center gap-[11px] pr-[5px] justify-end shrink-0">
          <span className="w-[8px] h-[2px] mt-[6px] bg-[#7a8ea6]" />
          <span className="w-[9px] h-[7px] border border-[#6f859e] border-t-2" />
          <X size={12} strokeWidth={2} className="text-[#7a8ea6]" />
        </div>
      </div>
      {/* tab row */}
      <div className="h-[24px] shrink-0 flex items-end relative">
        <div className="flex gap-[30px] pl-[60px] pt-[3px] items-center h-full">
          {TABS.map(([t, m]) => t === "Φορτία" ? (
            <div key={t} style={{ marginLeft: m }} className="h-[25px] -mb-[1px] -mr-[11px] pl-[9px] pr-[10px] pt-[2px] self-end flex items-center rounded-t-[3px] border border-b-0 border-[#9ebfe6] bg-gradient-to-b from-[#f2f7fd] to-[#dbe6f2] text-[11px] text-[#15428b] relative z-10">{t}</div>
          ) : (
            <span key={t} style={{ marginLeft: m }} className="text-[11px] text-[#15428b] whitespace-nowrap">{t}</span>
          ))}
        </div>
        <div className="absolute right-[4px] top-0 h-full flex items-center">
          <span className="text-[11px] text-[#15428b]">Style</span>
          <span className="ml-[9px]"><Caret /></span>
          <Lock size={17} strokeWidth={2.4} className="ml-[5px] text-[#c98a10] fill-[#f6c83c]" />
          <svg className="ml-[7px]" width="17" height="13" viewBox="0 0 18 13"><rect width="18" height="13" fill="#fff" /><path d="M0 1 H18 M0 4 H18 M0 7 H18 M0 10 H18" stroke="#1e4fa0" strokeWidth="1.4" /><rect width="7" height="6" fill="#1e4fa0" /><path d="M3.5 0 V6 M0 3 H7" stroke="#fff" /></svg>
          <span className="ml-[6px]"><Caret /></span>
          <span className="ml-[7px] w-[15px] h-[15px] rounded-full bg-[#1560bd] flex items-center justify-center text-white text-[12px] font-bold font-['Liberation_Serif',serif]">i</span>
        </div>
      </div>
      {/* ribbon */}
      <div className="h-[90px] shrink-0 mx-[1px] px-[1px] pt-[2px] flex gap-[2px] rounded-[2px] border border-[#a8c4e4] bg-gradient-to-b from-[#dbe5f0] via-[#c4d5e8] to-[#dff2ff]">
        <RGroup w={112} pl={3} title="Ορισμός">
          <RItem w={56} icon={IC.lc} l1="Φορτίσεις" />
          <RItem w={44} icon={IC.lg} l1="Ομάδες" l2="Φορτίων" />
        </RGroup>
        <RGroup w={279} pl={2} title="Φορτία πλακών">
          <RItem w={56} icon={IC.s1} l1="Εισαγωγή" caret />
          <RItem w={70} icon={IC.s2} l1="Επεξεργασία" />
          <RItem w={58} icon={IC.s3} l1="Γραμμές" l2="Διαρροής" inlineCaret />
          <RItem w={90} icon={IC.s4} l1="Απόδοση" l2="Αντιδράσεων" inlineCaret />
        </RGroup>
        <RGroup w={301} pl={3} title="Φορτία Μελών">
          <RItem w={54} icon={IC.m1} l1="Εισαγωγή" />
          <RItem w={70} icon={IC.m2} l1="Επεξεργασία" caret />
          <RItem w={56} icon={IC.m3} l1="Εμφάνιση" />
          <RItem w={60} icon={IC.m4} l1="Αντιγραφή" />
          <RItem w={54} icon={IC.m5} l1="Εργαλεία" caret />
        </RGroup>
        <RGroup w={344} pl={1} title="Ευρωκώδικας EC1">
          <RItem w={70} icon={IC.e1} l1="Παράμετροι" caret />
          <RItem w={66} icon={IC.e2} l1="Επεξεργασία" caret />
          <RItem w={58} icon={IC.e3} l1="Εμφάνιση" caret />
          <RItem w={64} icon={IC.e4} l1="Αντιστοιχία" l2="μελων" />
          <RItem w={78} icon={IC.e5} l1="Αποτελέσματα" />
        </RGroup>
      </div>
      {/* toolbar */}
      <div className="h-[29px] shrink-0 flex items-center">
        <div className="w-[780px] h-[26px] mt-[1px] rounded-r-[3px] bg-gradient-to-b from-[#e2eefc] to-[#c3d9f5] flex items-center pl-[6px]">
          <div className="w-[3px] h-[16px] border-l-2 border-dotted border-[#8aa4c4] mr-[3px]" />
          {TOOLS1.map((t, i) => <span key={i}>{t}</span>)}
          <span className="w-[1px] h-[18px] bg-[#9fb6d2] mx-[4px]" />
          {TOOLS2.map((t, i) => <span key={i}>{t}</span>)}
          <span className="ml-[379px] flex">{TOOLS3.map((t, i) => <span key={i}>{t}</span>)}</span>
          <span className="w-[1px] h-[18px] bg-[#9fb6d2] mx-[4px]" />
          {TOOLS4.map((t, i) => <span key={i}>{t}</span>)}
        </div>
      </div>
      {/* main */}
      <div className="flex-1 min-h-0 flex">
        {/* left panel */}
        <div className="w-[234px] shrink-0 flex flex-col pl-[1px] pr-[6px]">
          <div className="h-[20px] shrink-0 flex items-center justify-between bg-[#bcd2ec] px-[3px] text-[11.5px] text-[#15428b]">
            <span>Δεδομένα Εργου</span>
            <span className="flex items-center gap-[8px] pr-[2px] text-[#4a6a90]">
              <span className="w-[5px] h-[8px] border border-[#4a6a90]" /><X size={11} strokeWidth={2} />
            </span>
          </div>
          <div className="h-[26px] shrink-0 flex items-center pl-[9px] bg-gradient-to-b from-[#dbe9fb] to-[#c6dcf6]">
            <svg width="17" height="18" viewBox="0 0 17 18"><rect width="17" height="18" fill="#fff" /><text x="0" y="9" fontSize="10" fontWeight="700" fill="#a0108a" fontFamily="Liberation Serif">Σ</text><path d="M7 5 H16 V17 H7 Z M7 9 H16 M7 13 H16" fill="none" stroke="#444" /></svg>
            <span className="ml-[6px]"><Caret /></span>
            <svg className="ml-[7px]" width="16" height="16" viewBox="0 0 16 16"><rect width="16" height="16" fill="#fff" /><circle cx="6" cy="7" r="4" fill="#e88a60" /><circle cx="11" cy="9" r="4" fill="#f0a878" /></svg>
          </div>
          <div className="flex-1 min-h-0 flex border border-[#8ea8c6] bg-white ml-[2px] mr-[1px]">
            <Tree />
            <div className="py-[1px] h-full shrink-0 pr-[1px]"><VScroll top={1} thumb={136} w={16} /></div>
          </div>
          <div className="h-[22px] shrink-0 flex items-start text-[11px] text-[#15428b]">
            <div className="h-[19px] flex items-center pl-[5px] w-[112px] whitespace-nowrap overflow-hidden">
              <svg width="16" height="15" viewBox="0 0 16 15"><rect width="16" height="15" fill="#4a78b8" /><rect x="1" y="3" width="14" height="11" fill="#fff" /><path d="M2 13 L8 6 L13 13" fill="#d8843a" /></svg>
              <span className="ml-[2px]">Παράμετροι Ερ...</span>
            </div>
            <div className="h-[19px] flex items-center px-[2px] w-[110px] bg-[#e4effb] border border-t-0 border-[#92afd0] rounded-b-[3px] whitespace-nowrap overflow-hidden">
              <svg width="17" height="15" viewBox="0 0 17 15"><rect x="1" y="1" width="9" height="9" fill="#f4c24a" /><rect x="8" y="5" width="8" height="8" fill="#5b8ed8" /><path d="M2 13 L6 9" stroke="#9040b0" strokeWidth="2" /></svg>
              <span className="ml-[1px]">Δεδομένα Εργου</span>
            </div>
          </div>
        </div>
        {/* centre */}
        <div className="flex-1 min-w-0 flex flex-col mr-[7px]">
          <div className="flex-1 min-h-0 flex border-t-2 border-[#8a8f96]">
            <div className="flex-1 min-w-0 bg-[#1f2730] overflow-hidden"><Building /></div>
            <VScroll top={1} thumb={497} w={16} />
          </div>
          <div className="h-[20px] shrink-0 flex pl-[6px]">
            <div className="flex-1 h-[18px] bg-[#eff1f3] flex items-center">
              <div className="w-[13px] flex justify-center"><Arrow d="l" /></div>
              <div className="w-[531px] h-[16px] rounded-[2px] border border-[#9a9a9a] bg-gradient-to-b from-[#f6f6f6] to-[#d6d6d6] flex items-center justify-center gap-[1px]">
                <span className="w-[1px] h-[6px] bg-[#777]" /><span className="w-[1px] h-[6px] bg-[#777]" /><span className="w-[1px] h-[6px] bg-[#777]" />
              </div>
              <div className="flex-1" />
              <div className="w-[14px] flex justify-center"><Arrow d="r" /></div>
            </div>
            <div className="w-[1px]" />
          </div>
        </div>
        {/* right panel */}
        <div className="w-[204px] shrink-0 flex flex-col">
          <div className="h-[19px] shrink-0 flex items-center justify-between bg-[#b6cce6] pl-[3px] pr-[5px] text-[11.5px] text-[#15428b]">
            <span>Ιδιότητες</span>
            <span className="flex items-center gap-[9px] text-[#4a6a90]"><span className="w-[5px] h-[8px] border border-[#4a6a90]" /><X size={11} strokeWidth={2} /></span>
          </div>
          <div className="h-[24px] shrink-0 flex items-center pl-[5px] bg-gradient-to-b from-[#dbe9fb] to-[#c6dcf6]">
            <svg width="17" height="16" viewBox="0 0 17 16" fill="none" stroke="#444"><rect x=".5" y="1.5" width="5" height="5" /><rect x=".5" y="9.5" width="5" height="5" /><path d="M8 2 H16 M8 5 H16 M8 10 H16 M8 13 H16" stroke="#889" /></svg>
            <svg className="ml-[6px]" width="16" height="16" viewBox="0 0 16 16"><text x="0" y="7" fontSize="8" fontWeight="700" fill="#1e4fa0" fontFamily="Liberation Sans">A</text><text x="0" y="15" fontSize="8" fontWeight="700" fill="#b02020" fontFamily="Liberation Sans">Z</text><path d="M12 1 V14 M9 11 L12 15 L15 11" stroke="#111" fill="none" /></svg>
            <svg className="ml-[7px]" width="14" height="14" viewBox="0 0 14 14"><rect x=".5" y=".5" width="13" height="13" fill="#fff" stroke="#2a5ca8" /><rect x=".5" y=".5" width="13" height="3" fill="#2a5ca8" /><path d="M3 6 H11 M3 8.5 H11 M3 11 H11" stroke="#2a5ca8" /></svg>
            <svg className="ml-[8px]" width="12" height="16" viewBox="0 0 12 16"><polygon points="7,0 1,9 5,9 2,16 11,6 7,6 10,0" fill="#e8b020" stroke="#b87810" strokeWidth=".5" /></svg>
          </div>
          <div className="h-[577px] shrink-0 flex">
            <div className="flex-1 min-w-0 pl-[1px]">
              {PROPS.map((r, i) => <PropRow key={i} r={r} />)}
              <div className="h-[19px] flex bg-[#d3e2f2] items-center pl-[3px] text-[11.5px] text-[#111]">
                <span className="w-[100px]">Περισσότερα</span>
                <span className="flex-1 text-center font-bold">...</span>
              </div>
            </div>
            <div className="ml-[1px] mr-[2px]"><VScroll top={1} thumb={415} w={14} /></div>
          </div>
          <div className="flex-1 border-t border-[#9db8d8] bg-gradient-to-b from-[#cfe2f8] to-[#dae9fb]" />
        </div>
      </div>
      {/* status bar */}
      <div className="h-[18px] shrink-0 flex items-center bg-gradient-to-b from-[#cfe1f6] to-[#b7d2f2] text-[11px] whitespace-nowrap">
        <span className="ml-[9px] w-[390px] text-[#15428b]">Επιλέξτε μαθηματικό μέλος,κόμβο ή επιφανειακό. Δεξιό πλήκτρο για ...</span>
        <span className="w-[61px] text-[#1033c8]">ΑΞΟΝ</span>
        <span className="w-[165px] text-[#15428b]">-619.5 , -1074.1 , 3600.0</span>
        <span className="w-[74px] text-[#7f93ad]">ΟΡΘΟΓ.</span>
        <span className="w-[74px] text-[#7f93ad]">OSNAP</span>
        <span className="w-[63px] text-[#7f93ad]">ΒΗΜΑ</span>
        <span className="w-[71px] text-[#1033c8]">ΚΑΝΑΒΟΣ</span>
        <span className="w-[81px] text-[#7f93ad]">ΜΕ ΤΟΜΗ</span>
        <span className="w-[416px] text-[#7f93ad]">ΕΝΤΟΣ</span>
        <span className="w-[36px] h-full bg-[#ffff00]" />
      </div>
      {/* orb */}
      <div className="absolute left-[3px] top-[3px] w-[39px] h-[39px] rounded-full bg-gradient-to-b from-[#f0f4fa] to-[#b6c8de] border border-[#8fa3bb] flex items-center justify-center">
        <div className="w-[30px] h-[30px] rounded-full bg-gradient-to-b from-[#1d2f54] to-[#2c5aa0] flex items-center justify-center">
          <span className="w-[12px] h-[12px] rotate-45 border border-[#7ab0e0] bg-[#3a6cb0]" />
        </div>
      </div>
      <LoadDialog />
      <UniformDialog />
    </div>
  );
}
